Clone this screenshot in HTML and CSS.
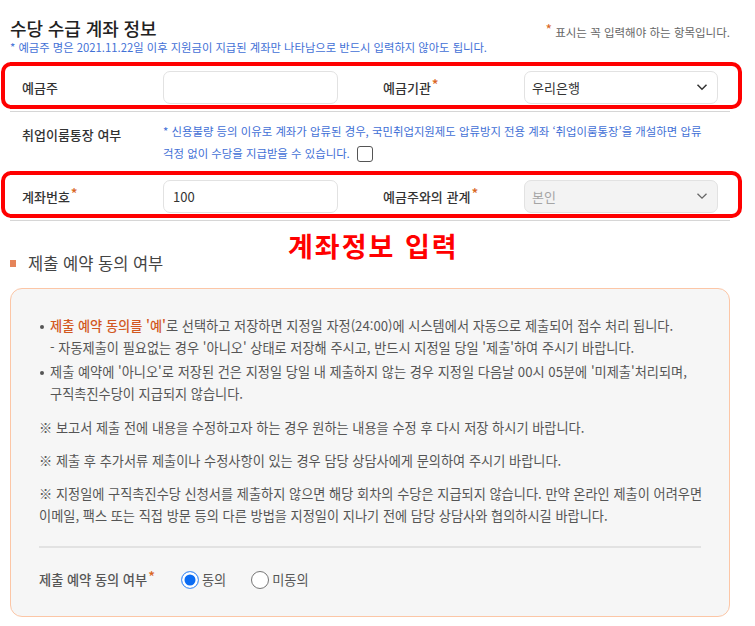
FILE: index.html
```html
<!DOCTYPE html>
<html lang="ko">
<head>
  <meta charset="UTF-8" />
  <meta name="viewport" content="width=device-width, initial-scale=1.0"/>
  <title>수당 수급 계좌 정보</title>
  <link rel="stylesheet" href="styles.css">
</head>
<body>
  <div class="page">
    <div class="head">
      <h2 class="title">수당 수급 계좌 정보</h2>
      <p class="req-note"><span class="star">*</span> 표시는 꼭 입력해야 하는 항목입니다.</p>
    </div>
    <p class="notice">* 예금주 명은 2021.11.22일 이후 지원금이 지급된 계좌만 나타남으로 반드시 입력하지 않아도 됩니다.</p>

    <div class="table">
      <div class="row marked">
        <label class="label">예금주</label>
        <input class="field" type="text" value="">
        <label class="label label-2">예금기관<span class="star">*</span></label>
        <div class="select">
          <span>우리은행</span>
          <svg width="12" height="8" viewBox="0 0 12 8"><path d="M1.5 1.8 6 6.2l4.5-4.4" fill="none" stroke="#333" stroke-width="1.5"/></svg>
        </div>
      </div>

      <div class="row tall">
        <label class="label">취업이룸통장 여부</label>
        <p class="row-note">* 신용불량 등의 이유로 계좌가 압류된 경우, 국민취업지원제도 압류방지 전용 계좌 ‘취업이룸통장’을 개설하면 압류<br>걱정 없이 수당을 지급받을 수 있습니다. <span class="checkbox"></span></p>
      </div>

      <div class="row marked">
        <label class="label">계좌번호<span class="star">*</span></label>
        <input class="field account" type="text" value="1002-123-456789">
        <label class="label label-2">예금주와의 관계<span class="star">*</span></label>
        <div class="select disabled">
          <span>본인</span>
          <svg width="12" height="8" viewBox="0 0 12 8"><path d="M1.5 1.8 6 6.2l4.5-4.4" fill="none" stroke="#666" stroke-width="1.3"/></svg>
        </div>
      </div>
    </div>

    <div class="sec">
      <h3 class="sec-title">제출 예약 동의 여부</h3>
      <div class="annot">계좌정보 입력</div>
    </div>

    <div class="box">
      <ul class="bullets">
        <li><b class="hl">제출 예약 동의를 '예'</b>로 선택하고 저장하면 지정일 자정(24:00)에 시스템에서 자동으로 제출되어 접수 처리 됩니다.<br>- 자동제출이 필요없는 경우 '아니오' 상태로 저장해 주시고, 반드시 지정일 당일 '제출'하여 주시기 바랍니다.</li>
        <li>제출 예약에 '아니오'로 저장된 건은 지정일 당일 내 제출하지 않는 경우 지정일 다음날 00시 05분에 '미제출'처리되며,<br>구직촉진수당이 지급되지 않습니다.</li>
      </ul>
      <p class="memo">※ 보고서 제출 전에 내용을 수정하고자 하는 경우 원하는 내용을 수정 후 다시 저장 하시기 바랍니다.</p>
      <p class="memo">※ 제출 후 추가서류 제출이나 수정사항이 있는 경우 담당 상담사에게 문의하여 주시기 바랍니다.</p>
      <p class="memo">※ 지정일에 구직촉진수당 신청서를 제출하지 않으면 해당 회차의 수당은 지급되지 않습니다. 만약 온라인 제출이 어려우면<br>이메일, 팩스 또는 직접 방문 등의 다른 방법을 지정일이 지나기 전에 담당 상담사와 협의하시길 바랍니다.</p>
      <hr class="divider">
      <div class="agree">
        <span class="agree-label">제출 예약 동의 여부<span class="star">*</span></span>
        <label class="opt"><span class="radio on"></span>동의</label>
        <label class="opt"><span class="radio"></span>미동의</label>
      </div>
    </div>
  </div>
</body>
</html>
```

FILE: styles.css
```css
body {
  margin: 0;
  font-family: 'Noto Sans CJK KR', 'Noto Sans', sans-serif;
  font-size: 13px;
  color: #333;
  background: #fff;
}

.page {
  padding: 12px 25px 0 10px;
}

.head {
  display: flex;
  justify-content: space-between;
  align-items: flex-end;
  height: 28px;
}

.title {
  margin: 0;
  font-size: 18px;
  font-weight: 500;
  line-height: 24px;
  color: #222;
  letter-spacing: -0.1px;
}

.req-note {
  margin: 0;
  font-size: 11.5px;
  line-height: 16px;
  color: #666;
}

.star {
  color: #d9661f;
  font-size: 14px;
  position: relative;
  top: -3px;
  margin-left: 1px;
}

.req-note .star {
  top: -2px;
}

.notice {
  margin: 0 0 8px;
  font-size: 11.3px;
  line-height: 14px;
  color: #4270d6;
}

.table {
  border-top: 1px solid #555;
}

.row {
  position: relative;
  display: grid;
  grid-template-columns: 141px 175px 45px 141px 194px;
  align-items: center;
  height: 48px;
  padding-left: 12px;
  border-bottom: 1px solid #d6d6d6;
}

.row.marked::after {
  content: "";
  position: absolute;
  left: -9px;
  right: -12px;
  top: -1px;
  height: 39px;
  border: 4px solid #f00;
  border-radius: 10px;
  pointer-events: none;
}

.row.tall {
  height: auto;
  align-items: start;
  padding-top: 8px;
  padding-bottom: 7px;
  grid-template-columns: 141px auto;
}

.label {
  font-weight: 500;
  color: #333;
}

.row.tall .label {
  line-height: 22px;
  margin-top: 4px;
}

.label-2 {
  grid-column: 4;
}

.field {
  box-sizing: border-box;
  width: 175px;
  height: 33px;
  border: 1px solid #e2e2e2;
  border-radius: 7px;
  padding: 0 9px;
  font: inherit;
  color: #333;
  background: #fff;
}

.field.account {
  padding-right: 142px;
}

.select {
  box-sizing: border-box;
  height: 33px;
  border: 1px solid #e2e2e2;
  border-radius: 7px;
  padding: 0 9px 0 7px;
  display: flex;
  align-items: center;
  justify-content: space-between;
  color: #333;
  background: #fff;
}

.select.disabled {
  background: #f3f3f3;
  color: #a5a5a5;
}

.row-note {
  margin: 0;
  font-size: 11.4px;
  line-height: 22px;
  color: #4270d6;
  white-space: nowrap;
}

.checkbox {
  display: inline-block;
  width: 14px;
  height: 14px;
  border: 1px solid #555;
  border-radius: 3px;
  background: #fff;
  vertical-align: middle;
  margin-left: 4px;
  position: relative;
  top: -1px;
}

.sec {
  position: relative;
  margin-top: 30px;
}

.sec-title {
  margin: 0;
  font-size: 16.5px;
  font-weight: 400;
  line-height: 24px;
  color: #444;
  display: flex;
  align-items: center;
  gap: 12px;
}

.sec-title::before {
  content: "";
  width: 6px;
  height: 7px;
  background: #e5845a;
}

.annot {
  position: absolute;
  left: 278px;
  top: -21px;
  font-size: 27px;
  font-weight: 700;
  line-height: 32px;
  color: #f00;
  letter-spacing: 2px;
}

.box {
  margin-top: 13px;
  background: #f6f6f6;
  border: 1px solid #fcc6a6;
  border-radius: 12px;
  padding: 26px 28px 25px;
  color: #555;
  font-size: 13.2px;
  line-height: 22px;
}

.bullets {
  margin: 0;
  padding: 0;
  list-style: none;
}

.bullets li {
  position: relative;
  padding-left: 11px;
  white-space: nowrap;
}

.bullets li + li {
  margin-top: 2px;
}

.bullets li::before {
  content: "";
  position: absolute;
  left: 1px;
  top: 10px;
  width: 4px;
  height: 4px;
  border-radius: 50%;
  background: #555;
}

.hl {
  color: #d2581f;
  font-weight: 500;
}

.memo {
  margin: 12px 0 0;
  white-space: nowrap;
}

.memo + .memo {
  margin-top: 11px;
}

.divider {
  margin: 19px 0 0;
  border: none;
  height: 2px;
  background: #e2e2e2;
}

.agree {
  margin-top: 20px;
  display: flex;
  align-items: center;
}

.agree-label {
  font-weight: 500;
  color: #555;
  margin-right: 26px;
}

.opt {
  display: flex;
  align-items: center;
  gap: 3px;
  margin-right: 25px;
  color: #555;
}

.radio {
  box-sizing: border-box;
  width: 18px;
  height: 18px;
  border-radius: 50%;
  border: 1px solid #767676;
  background: #fff;
}

.radio.on {
  border: 1.5px solid #5b9cf5;
  box-shadow: inset 0 0 0 2.5px #fff;
  background: #0b6cf3;
}
```
